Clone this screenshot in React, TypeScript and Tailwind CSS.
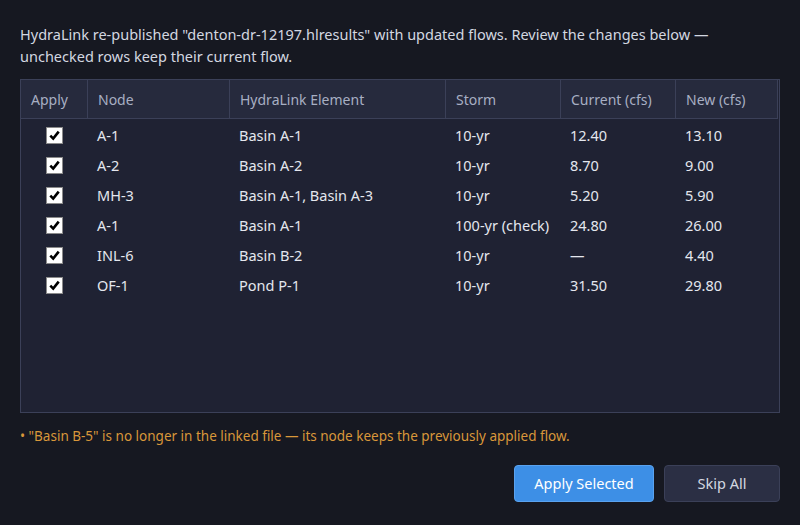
import { useState } from 'react'

interface Row {
  node: string
  element: string
  storm: string
  current: string
  next: string
}

const rows: Row[] = [
  { node: 'A-1', element: 'Basin A-1', storm: '10-yr', current: '12.40', next: '13.10' },
  { node: 'A-2', element: 'Basin A-2', storm: '10-yr', current: '8.70', next: '9.00' },
  { node: 'MH-3', element: 'Basin A-1, Basin A-3', storm: '10-yr', current: '5.20', next: '5.90' },
  { node: 'A-1', element: 'Basin A-1', storm: '100-yr (check)', current: '24.80', next: '26.00' },
  { node: 'INL-6', element: 'Basin B-2', storm: '10-yr', current: '—', next: '4.40' },
  { node: 'OF-1', element: 'Pond P-1', storm: '10-yr', current: '31.50', next: '29.80' },
]

const headers = ['Apply', 'Node', 'HydraLink Element', 'Storm', 'Current (cfs)', 'New (cfs)']
const widths = ['w-[66px]', 'w-[142px]', 'w-[216px]', 'w-[115px]', 'w-[115px]', 'w-[101px]']

function Check({ on, onToggle }: { on: boolean; onToggle: () => void }) {
  return (
    <button
      type="button"
      onClick={onToggle}
      className="w-[17px] h-[17px] bg-white border border-[#8a8a8a] flex items-center justify-center p-0"
    >
      {on && (
        <svg width="13" height="13" viewBox="0 0 13 13">
          <path d="M2.3 6.6 L5.2 9.6 L10.7 2.6" fill="none" stroke="#000" strokeWidth="2.6" />
        </svg>
      )}
    </button>
  )
}

export default function App() {
  const [checked, setChecked] = useState<boolean[]>(rows.map(() => true))

  return (
    <div
      className="w-[800px] h-[525px] bg-[#161821] text-[#d3d7e0] flex flex-col px-5 pt-[23px]"
      style={{ fontFamily: '"Noto Sans", sans-serif' }}
    >
      <p className="m-0 text-[14.5px] leading-[22px] pr-[40px]">
        HydraLink re-published "denton-dr-12197.hlresults" with updated flows. Review the changes below —
        unchecked rows keep their current flow.
      </p>

      <div className="mt-[12px] h-[334px] border border-[#3b4058] bg-[#1f2233] flex flex-col">
        <div className="flex h-[39px] w-[757px] bg-[#262a3d] border-b border-r border-[#3b4058]">
          {headers.map((h, i) => (
            <div
              key={h}
              className={`${widths[i]} flex items-center px-[10px] text-[14px] text-[#a8afc3] ${i > 0 ? 'border-l border-[#3b4058]' : ''}`}
            >
              {h}
            </div>
          ))}
        </div>
        <div className="flex flex-col pt-[2px]">
          {rows.map((r, i) => (
            <div key={i} className="flex h-[30px] items-center text-[14.5px] text-[#e4e7ee]">
              <div className="w-[66px] flex justify-center pl-[1px] -mt-[1px]">
                <Check
                  on={checked[i]}
                  onToggle={() => setChecked(c => c.map((v, j) => (j === i ? !v : v)))}
                />
              </div>
              <div className="w-[142px] px-[10px]">{r.node}</div>
              <div className="w-[216px] px-[10px]">{r.element}</div>
              <div className="w-[115px] px-[10px]">{r.storm}</div>
              <div className="w-[115px] px-[10px]">{r.current}</div>
              <div className="w-[101px] px-[10px]">{r.next}</div>
            </div>
          ))}
        </div>
      </div>

      <p className="m-0 mt-[14px] text-[13.5px] leading-[18px] text-[#d9973a]">
        • "Basin B-5" is no longer in the linked file — its node keeps the previously applied flow.
      </p>

      <div className="flex justify-end gap-[10px] mt-[20px]">
        <button
          type="button"
          className="w-[140px] h-[37px] rounded-[4px] bg-[#3d8fe6] border border-[#5aa2ee] text-white text-[14.5px]"
        >
          Apply Selected
        </button>
        <button
          type="button"
          className="w-[116px] h-[37px] rounded-[4px] bg-[#2b2f44] border border-[#3b4058] text-[#d3d7e0] text-[14.5px]"
        >
          Skip All
        </button>
      </div>
    </div>
  )
}
